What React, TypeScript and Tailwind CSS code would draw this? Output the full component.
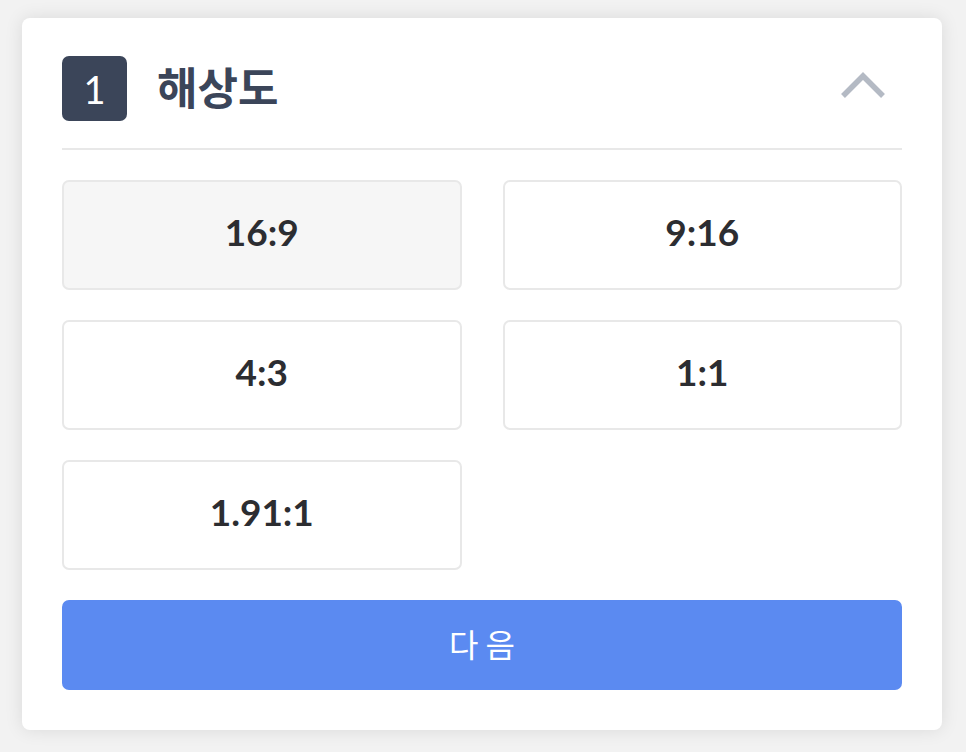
import React from "react";

const options = ["16:9", "9:16", "4:3", "1:1", "1.91:1"];

export default function App() {
  const [selected, setSelected] = React.useState("16:9");
  return (
    <div className="min-h-screen w-full bg-[#f2f2f2] pt-[18px] pl-[22px] pr-[24px] pb-[22px]" style={{ minHeight: 752 }}>
      <div className="w-[920px] h-[712px] bg-white rounded-[8px] shadow-[0_0_18px_rgba(0,0,0,0.10)] px-[40px] pt-[38px] pb-[40px] flex flex-col">
        <div className="flex items-center h-[65px] shrink-0">
          <div className="w-[65px] h-[65px] rounded-[7px] bg-[#3b4559] flex items-center justify-center text-white text-[38px] font-['Lato','Noto_Sans_CJK_KR',sans-serif] leading-none">
            1
          </div>
          <div className="ml-[30px] text-[44px] font-bold text-[#3b4559] font-['Noto_Sans_CJK_KR',sans-serif] leading-none pb-[6px]">
            해상도
          </div>
          <div className="ml-auto mr-[16px] mt-[-6px]">
            <svg width="46" height="30" viewBox="0 0 46 30">
              <path d="M3 25 L23 5 L43 25" fill="none" stroke="#b4bac4" strokeWidth="5.5" strokeLinecap="butt" strokeLinejoin="miter" />
            </svg>
          </div>
        </div>
        <div className="mt-[27px] h-[2px] bg-[#e8e8e8] shrink-0" />
        <div className="mt-[30px] grid grid-cols-2 gap-x-[41px] gap-y-[30px] shrink-0">
          {options.map((o) => (
            <button
              key={o}
              onClick={() => setSelected(o)}
              className={`h-[110px] rounded-[7px] border-2 border-[#e8e8e8] flex items-center justify-center pb-[8px] text-[37px] font-bold text-[#2c2d31] font-['Lato',sans-serif] leading-none ${selected === o ? "bg-[#f6f6f6]" : "bg-white"}`}
            >
              {o}
            </button>
          ))}
        </div>
        <button className="mt-[30px] h-[90px] shrink-0 w-full rounded-[7px] bg-[#5b8af1] text-white text-[32px] font-['Noto_Sans_CJK_KR',sans-serif] flex items-center justify-center pb-[4px]">
          다 음
        </button>
      </div>
    </div>
  );
}
